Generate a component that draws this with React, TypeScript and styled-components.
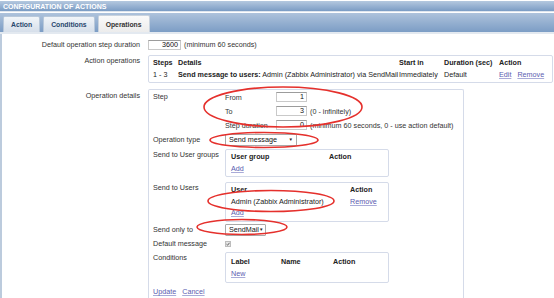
import React from "react";
import styled, { createGlobalStyle } from "styled-components";

const GlobalStyle = createGlobalStyle`
  * { box-sizing: border-box; }
  html, body { margin: 0; padding: 0; background: #fff; }
  body {
    font-family: "Liberation Sans", Arial, sans-serif;
    font-size: 7.2px;
    color: #222;
  }
`;

const Page = styled.div`
  position: relative;
  width: 554px;
  height: 298px;
  overflow: hidden;
  padding-top: 1px;
`;

const Header = styled.div`
  height: 11px;
  padding-left: 3px;
  background: linear-gradient(#b4c8df, #7b9cc4);
  color: #fff;
  font-weight: bold;
  font-size: 7px;
  line-height: 11px;
  border-bottom: 1px solid #dfe6ee;
`;

const TabBar = styled.div`
  height: 21px;
  margin-top: 1px;
  padding-left: 3px;
  display: flex;
  align-items: flex-end;
  gap: 3px;
  background: linear-gradient(#aec3dc, #7c9dc5);
  border-bottom: 2px solid #e3e9f0;
`;

const Tab = styled.div<{ $active?: boolean }>`
  height: ${(p) => (p.$active ? 17 : 16)}px;
  padding: 0 7px;
  border: 1px solid ${(p) => (p.$active ? "#c9d3de" : "#b8c8da")};
  border-bottom: none;
  border-radius: 2px 2px 0 0;
  background: ${(p) =>
    p.$active
      ? "linear-gradient(#fafafa, #ececec)"
      : "linear-gradient(#f1f5f9, #d6dfea)"};
  color: ${(p) => (p.$active ? "#333" : "#27466c")};
  font-weight: bold;
  font-size: 6.8px;
  line-height: ${(p) => (p.$active ? 17 : 15)}px;
`;

const Content = styled.div`
  height: 300px;
  border-left: 2px solid #bccbdd;
  padding-top: 5px;
`;

const Row = styled.div<{ $mt?: number }>`
  display: flex;
  margin-top: ${(p) => p.$mt ?? 0}px;
`;

const Label = styled.div<{ $pt?: number }>`
  width: 146px;
  flex-shrink: 0;
  padding-right: 8px;
  padding-top: ${(p) => p.$pt ?? 0}px;
  text-align: right;
  line-height: 12px;
  color: #333;
`;

const Field = styled.div`
  display: flex;
  align-items: center;
  gap: 3px;
  white-space: nowrap;
  line-height: 12px;
`;

const NumInput = styled.div<{ $w: number; $h?: number }>`
  width: ${(p) => p.$w}px;
  height: ${(p) => p.$h ?? 10}px;
  border: 1px solid #c9c9c9;
  border-top-color: #9c9c9c;
  background: #fff;
  text-align: right;
  padding-right: 2px;
  line-height: ${(p) => (p.$h ?? 10) - 2}px;
  color: #111;
`;

const Box = styled.div<{ $w: number; $h?: number }>`
  width: ${(p) => p.$w}px;
  ${(p) => (p.$h ? `height: ${p.$h}px;` : "")}
  border: 1px solid #d5dbe9;
  border-radius: 2px;
  background: #fff;
`;

const DataTable = styled.table`
  border-collapse: collapse;
  table-layout: fixed;
  white-space: nowrap;
`;

const Th = styled.th`
  text-align: left;
  font-weight: bold;
  padding: 0;
  height: 12px;
  color: #222;
`;

const Td = styled.td`
  padding: 0;
  height: 13px;
  color: #222;
`;

const Link = styled.a`
  color: #5a5cb0;
  text-decoration: underline;
  text-decoration-color: #a9abd8;
  text-underline-offset: 1px;
  margin-right: 6px;
  cursor: pointer;
`;

const DetailsBox = styled(Box)`
  border-radius: 2px 2px 0 0;
  padding: 0 0 0 4px;
  height: 220px;
  border-bottom: none;
`;

const SubRow = styled.div<{ $mt?: number; $h?: number }>`
  display: flex;
  margin-top: ${(p) => p.$mt ?? 0}px;
  ${(p) => (p.$h ? `height: ${p.$h}px; align-items: center;` : "")}
`;

const SubLabel = styled.div<{ $pt?: number }>`
  width: 72px;
  flex-shrink: 0;
  padding-top: ${(p) => p.$pt ?? 0}px;
  line-height: 12px;
  color: #333;
  white-space: nowrap;
`;

const StepGrid = styled.div`
  display: grid;
  grid-template-columns: 51px auto;
  grid-auto-rows: 14px;
  align-items: center;
  white-space: nowrap;
`;

const StepCell = styled.div`
  display: flex;
  align-items: center;
  gap: 3px;
  color: #333;
`;

const Select = styled.div<{ $w: number }>`
  width: ${(p) => p.$w}px;
  height: 12px;
  border: 1px solid #a9a9a9;
  border-radius: 1px;
  background: #fff;
  display: flex;
  align-items: center;
  justify-content: space-between;
  padding: 0 3px 0 3px;
  color: #111;
  line-height: 10px;
`;

const Arrow = styled.span`
  font-size: 4.5px;
  color: #222;
`;

const InnerBox = styled(Box)`
  padding: 0 5px;
`;

const Check = styled.div`
  width: 6px;
  height: 6px;
  border: 1px solid #bdbdbd;
  background: #e6e6e6;
  display: flex;
  align-items: center;
  justify-content: center;
`;

const Overlay = styled.svg`
  position: absolute;
  left: 0;
  top: 0;
  pointer-events: none;
`;

const Hint = styled.span`
  color: #333;
`;

const Cols = ({ widths }: { widths: number[] }) => (
  <colgroup>
    {widths.map((w, i) => (
      <col key={i} style={{ width: w }} />
    ))}
  </colgroup>
);

export default function App() {
  return (
    <Page>
      <GlobalStyle />
      <Header>CONFIGURATION OF ACTIONS</Header>
      <TabBar>
        <Tab>Action</Tab>
        <Tab>Conditions</Tab>
        <Tab $active>Operations</Tab>
      </TabBar>
      <Content>
        <Row>
          <Label>Default operation step duration</Label>
          <Field>
            <NumInput $w={33}>3600</NumInput>
            <Hint>(minimum 60 seconds)</Hint>
          </Field>
        </Row>
        <Row $mt={4}>
          <Label>Action operations</Label>
          <Box $w={405} $h={28}>
            <DataTable style={{ marginLeft: 4, width: 398 }}>
              <Cols widths={[25, 221, 45, 55, 52]} />
              <thead>
                <tr>
                  <Th>Steps</Th>
                  <Th>Details</Th>
                  <Th>Start in</Th>
                  <Th>Duration (sec)</Th>
                  <Th>Action</Th>
                </tr>
              </thead>
              <tbody>
                <tr>
                  <Td>1 - 3</Td>
                  <Td>
                    <b>Send message to users:</b> Admin (Zabbix Administrator) via SendMail
                  </Td>
                  <Td>Immediately</Td>
                  <Td>Default</Td>
                  <Td>
                    <Link>Edit</Link>
                    <Link>Remove</Link>
                  </Td>
                </tr>
              </tbody>
            </DataTable>
          </Box>
        </Row>
        <Row $mt={6}>
          <Label $pt={1}>Operation details</Label>
          <DetailsBox $w={316}>
            <SubRow>
              <SubLabel $pt={1}>Step</SubLabel>
              <StepGrid>
                <StepCell>From</StepCell>
                <StepCell>
                  <NumInput $w={31}>1</NumInput>
                </StepCell>
                <StepCell>To</StepCell>
                <StepCell>
                  <NumInput $w={31}>3</NumInput>
                  <Hint>(0 - infinitely)</Hint>
                </StepCell>
                <StepCell>Step duration</StepCell>
                <StepCell>
                  <NumInput $w={31}>0</NumInput>
                  <Hint>(minimum 60 seconds, 0 - use action default)</Hint>
                </StepCell>
              </StepGrid>
            </SubRow>
            <SubRow $mt={1} $h={14}>
              <SubLabel>Operation type</SubLabel>
              <Select $w={72}>
                Send message <Arrow>▼</Arrow>
              </Select>
            </SubRow>
            <SubRow $mt={2}>
              <SubLabel>Send to User groups</SubLabel>
              <InnerBox $w={164} $h={28}>
                <DataTable style={{ width: 152 }}>
                  <Cols widths={[98, 54]} />
                  <thead>
                    <tr>
                      <Th>User group</Th>
                      <Th>Action</Th>
                    </tr>
                  </thead>
                  <tbody>
                    <tr>
                      <Td>
                        <Link>Add</Link>
                      </Td>
                      <Td />
                    </tr>
                  </tbody>
                </DataTable>
              </InnerBox>
            </SubRow>
            <SubRow $mt={5}>
              <SubLabel>Send to Users</SubLabel>
              <InnerBox $w={164} $h={40}>
                <DataTable style={{ width: 152 }}>
                  <Cols widths={[119, 33]} />
                  <thead>
                    <tr>
                      <Th>User</Th>
                      <Th>Action</Th>
                    </tr>
                  </thead>
                  <tbody>
                    <tr>
                      <Td>Admin (Zabbix Administrator)</Td>
                      <Td>
                        <Link>Remove</Link>
                      </Td>
                    </tr>
                    <tr>
                      <Td style={{ height: 11, verticalAlign: "top" }}>
                        <Link>Add</Link>
                      </Td>
                      <Td />
                    </tr>
                  </tbody>
                </DataTable>
              </InnerBox>
            </SubRow>
            <SubRow $mt={1} $h={14}>
              <SubLabel>Send only to</SubLabel>
              <Select $w={41}>
                SendMail <Arrow>▼</Arrow>
              </Select>
            </SubRow>
            <SubRow $h={14}>
              <SubLabel>Default message</SubLabel>
              <Check>
                <svg width="4" height="4" viewBox="0 0 4 4">
                  <path d="M0.5 2.2 L1.6 3.2 L3.5 0.8" stroke="#555" strokeWidth="0.9" fill="none" />
                </svg>
              </Check>
            </SubRow>
            <SubRow $mt={1}>
              <SubLabel>Conditions</SubLabel>
              <InnerBox $w={164} $h={31}>
                <DataTable style={{ marginTop: 2, width: 152 }}>
                  <Cols widths={[50, 52, 50]} />
                  <thead>
                    <tr>
                      <Th>Label</Th>
                      <Th>Name</Th>
                      <Th>Action</Th>
                    </tr>
                  </thead>
                  <tbody>
                    <tr>
                      <Td>
                        <Link>New</Link>
                      </Td>
                      <Td />
                      <Td />
                    </tr>
                  </tbody>
                </DataTable>
              </InnerBox>
            </SubRow>
            <SubRow $mt={3}>
              <Field>
                <Link style={{ marginRight: 3 }}>Update</Link>
                <Link>Cancel</Link>
              </Field>
            </SubRow>
          </DetailsBox>
        </Row>
      </Content>
      <Overlay width="554" height="298" viewBox="0 0 554 298">
        <g fill="none" stroke="#e5302c" strokeWidth="1.6">
          <ellipse cx="283" cy="107" rx="79" ry="20" />
          <ellipse cx="264" cy="140" rx="54" ry="7.5" />
          <ellipse cx="271" cy="201" rx="63" ry="10.5" />
          <ellipse cx="242" cy="227" rx="45" ry="7.5" />
        </g>
      </Overlay>
    </Page>
  );
}
